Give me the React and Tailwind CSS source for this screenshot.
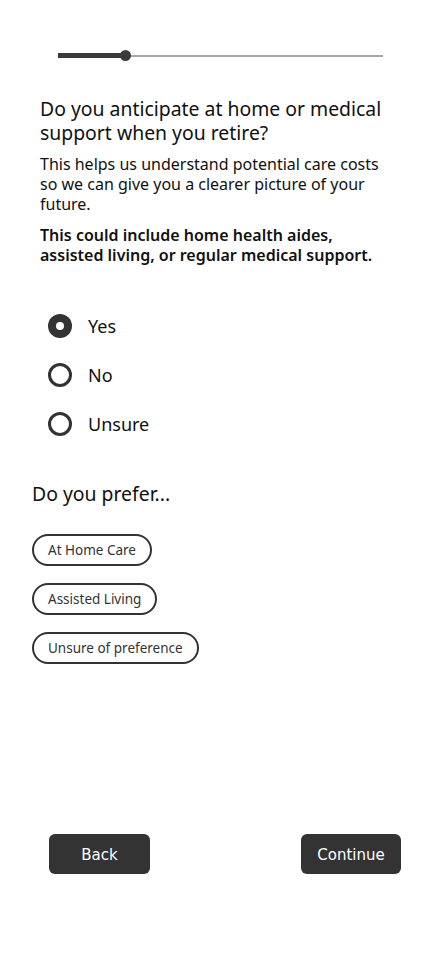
export default function App() {
  const radios = [
    { label: "Yes", checked: true },
    { label: "No", checked: false },
    { label: "Unsure", checked: false },
  ];
  const pills = ["At Home Care", "Assisted Living", "Unsure of preference"];
  return (
    <div className="w-[440px] h-[956px] bg-white text-black flex flex-col" style={{ fontFamily: "'Noto Sans', sans-serif" }}>
      <div className="pt-[50px] px-[58px] pr-[57px]">
        <div className="relative h-[11px] flex items-center">
          <div className="h-[2px] w-full bg-[#a6a6a6]" />
          <div className="absolute left-0 top-[3px] h-[5px] w-[68px] bg-[#3a3a3a]" />
          <div className="absolute left-[62px] top-0 h-[11px] w-[11px] rounded-full bg-[#3a3a3a]" />
        </div>
      </div>
      <div className="px-[40px] pt-[36px]">
        <h1 className="text-[19.4px] leading-[24px] text-[#111]">Do you anticipate at home or medical support when you retire?</h1>
        <p className="mt-[9px] text-[16px] leading-[20px] text-[#111]">This helps us understand potential care costs so we can give you a clearer picture of your future.</p>
        <p className="mt-[11px] text-[16px] leading-[20px] font-semibold text-[#111]">This could include home health aides, assisted living, or regular medical support.</p>
      </div>
      <div className="px-[48px] pt-[49px] flex flex-col gap-[25px]">
        {radios.map((r) => (
          <div key={r.label} className="flex items-center gap-[16px]">
            <div className={`w-[24px] h-[24px] rounded-full flex items-center justify-center ${r.checked ? "bg-[#333]" : "border-[3px] border-[#333]"}`}>
              {r.checked && <div className="w-[8px] h-[8px] rounded-full bg-white" />}
            </div>
            <span className="text-[18px] leading-[24px] text-[#111]">{r.label}</span>
          </div>
        ))}
      </div>
      <div className="px-[32px] pt-[46px]">
        <h2 className="text-[19.4px] leading-[24px] text-[#111]">Do you prefer...</h2>
        <div className="mt-[28px] flex flex-col items-start gap-[17px]">
          {pills.map((p) => (
            <div key={p} className="h-[32px] px-[14px] rounded-full border-2 border-[#333] flex items-center text-[13.5px] text-[#333]">{p}</div>
          ))}
        </div>
      </div>
      <div className="mt-auto mb-[82px] pl-[49px] pr-[39px] flex justify-between">
        <button className="w-[101px] h-[40px] rounded-[6px] bg-[#333] text-white text-[15px] pt-[3px]" style={{ fontFamily: "'Comic Sans MS', 'DejaVu Sans', sans-serif" }}>Back</button>
        <button className="w-[100px] h-[40px] rounded-[6px] bg-[#333] text-white text-[15px] pt-[3px]" style={{ fontFamily: "'Comic Sans MS', 'DejaVu Sans', sans-serif" }}>Continue</button>
      </div>
    </div>
  );
}
